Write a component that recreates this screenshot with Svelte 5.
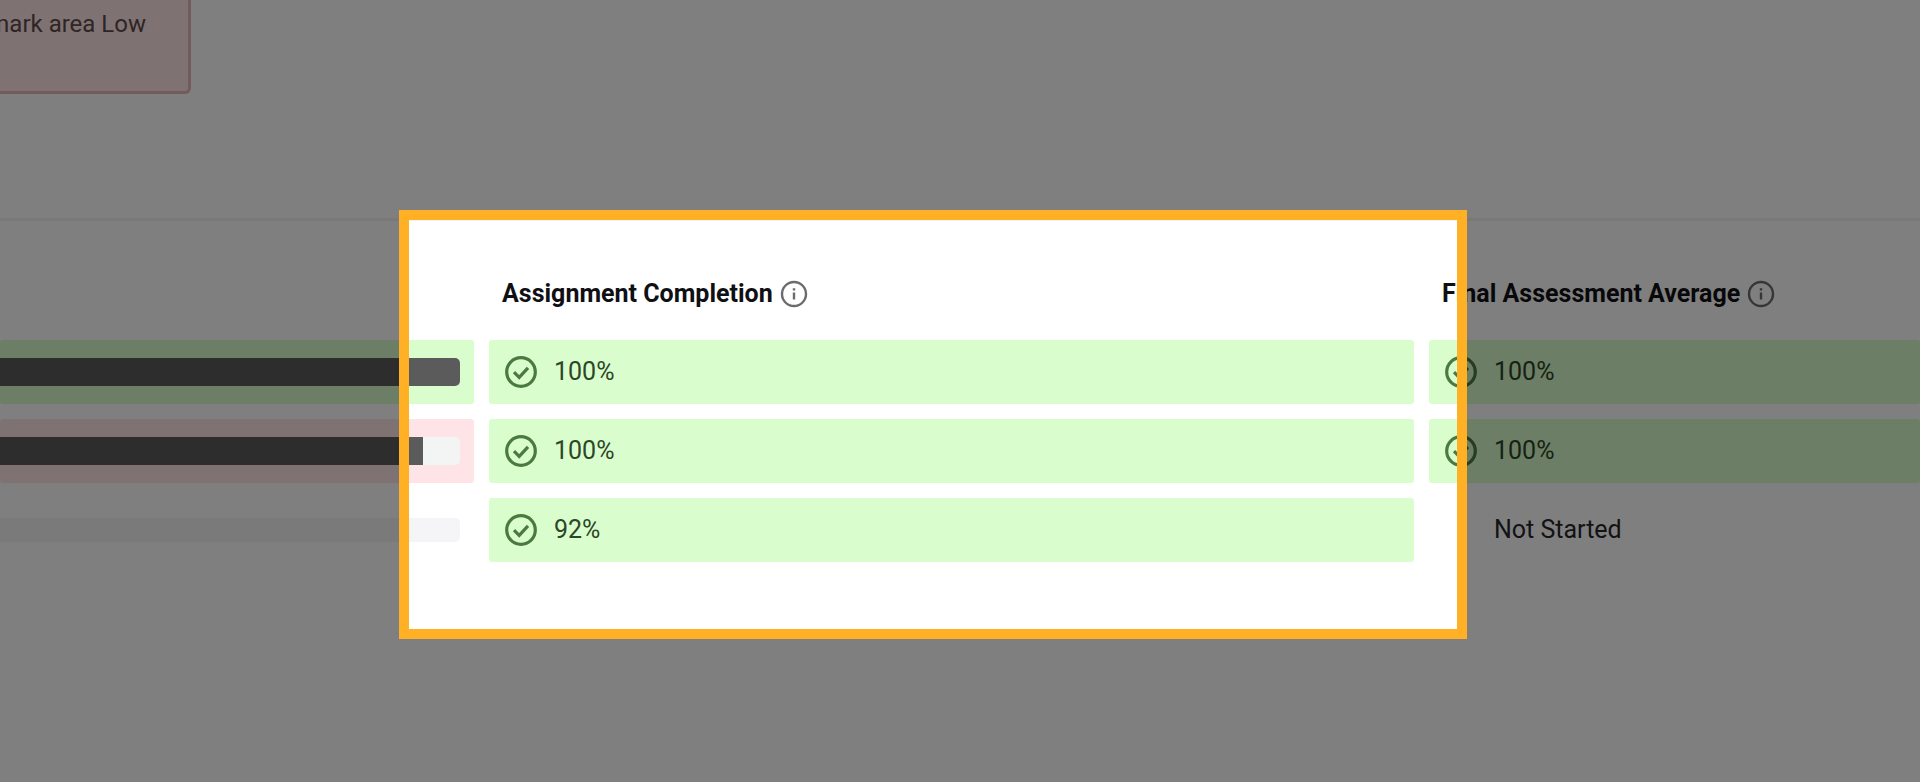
<script>
  const columns = ['Assignment Completion', 'Final Assessment Average'];
  const rows = [
    { progress: 100, tone: 'good', completion: '100%', average: '100%' },
    { progress: 92, tone: 'low', completion: '100%', average: '100%' },
    { progress: 0, tone: 'none', completion: '92%', average: null }
  ];
</script>

{#snippet check()}
  <svg class="check" viewBox="0 0 32 32" aria-hidden="true">
    <circle cx="16" cy="16" r="14.3" />
    <path d="M9 16.2l5.2 5.2 8.8-9.6" />
  </svg>
{/snippet}

<main class="page">
  <header class="summary">
    <div class="alert"><span>mark area Low</span></div>
  </header>

  <section class="results">
    <table>
      <thead>
        <tr>
          <td></td>
          {#each columns as name}
            <th scope="col">
              <span>{name}</span>
              <button type="button" aria-label="About {name}">
                <svg viewBox="0 0 28 28" aria-hidden="true">
                  <circle cx="14" cy="14" r="12" />
                  <path d="M14 12.5v7M14 8.2v2.2" />
                </svg>
              </button>
            </th>
          {/each}
        </tr>
      </thead>
      <tbody>
        {#each rows as row}
          <tr>
            <td class="meter {row.tone}">
              <progress max="100" value={row.progress} aria-label="Progress"></progress>
            </td>
            <td class="score good">{@render check()}{row.completion}</td>
            {#if row.average}
              <td class="score good">{@render check()}{row.average}</td>
            {:else}
              <td class="score pending">Not Started</td>
            {/if}
          </tr>
        {/each}
      </tbody>
    </table>
  </section>

  <div class="spotlight"></div>
</main>

<style>
  :global(body) {
    background: #fff;
  }

  .page {
    position: relative;
    min-height: 100vh;
    overflow: hidden;
    font-family: Roboto, sans-serif;
    font-size: 25px;
    line-height: 32px;
    color: #1c1c1e;
  }

  .summary {
    display: flex;
    height: 218px;
    border-bottom: 3px solid #f3f3f5;
  }

  .alert {
    box-sizing: border-box;
    display: flex;
    justify-content: flex-end;
    width: 191px;
    height: 94px;
    padding: 8px 42px 0 0;
    overflow: hidden;
    border: 3px solid #e6b4b6;
    border-width: 0 3px 3px 0;
    border-radius: 0 0 6px 0;
    background: #fee4e6;
    color: #5e4a4c;
    font-size: 24px;
    white-space: nowrap;
  }

  table,
  thead,
  tbody {
    display: grid;
  }

  tbody {
    gap: 15px;
  }

  tr {
    display: grid;
    grid-template-columns: 474fr 925fr 491fr;
    column-gap: 15px;
  }

  th,
  td {
    display: flex;
    align-items: center;
    padding: 0;
    min-width: 0;
  }

  th {
    box-sizing: border-box;
    gap: 7px;
    height: 119px;
    padding: 26px 13px 0;
    color: #101014;
    font-weight: 700;
    white-space: nowrap;
  }

  button {
    display: flex;
    padding: 0;
    border: 0;
    background: none;
    color: #6c6b70;
  }

  svg {
    fill: none;
    stroke: currentColor;
  }

  button svg {
    width: 28px;
    height: 28px;
    stroke-width: 2.4;
  }

  tbody td {
    height: 64px;
    border-radius: 3px;
  }

  .good {
    background: #dafdcd;
  }

  .low {
    background: #fee4e6;
  }

  .meter {
    padding-right: 14px;
  }

  progress {
    appearance: none;
    width: 100%;
    height: 28px;
    border: 0;
    border-radius: 0 5px 5px 0;
    overflow: hidden;
    background: #f3f5f5;
  }

  progress::-webkit-progress-bar {
    background: #f3f5f5;
  }

  progress::-webkit-progress-value {
    background: #5b5b5c;
  }

  .none progress {
    height: 24px;
  }

  .none progress::-webkit-progress-bar {
    background: #f5f4f6;
  }

  .score {
    gap: 17px;
    padding-left: 16px;
    line-height: 34px;
    color: #2c4628;
  }

  .pending {
    padding-left: 65px;
    color: #26262a;
  }

  .check {
    width: 32px;
    height: 32px;
    color: #4b7a41;
    stroke-width: 3.2;
  }

  /* Dims everything outside the highlighted area */
  .spotlight {
    position: absolute;
    top: 210px;
    left: 20.8%;
    right: 23.6%;
    height: 409px;
    border: 10px solid #ffb024;
    box-shadow: 0 0 0 4000px rgb(0 0 0 / 50%);
    pointer-events: none;
  }
</style>
